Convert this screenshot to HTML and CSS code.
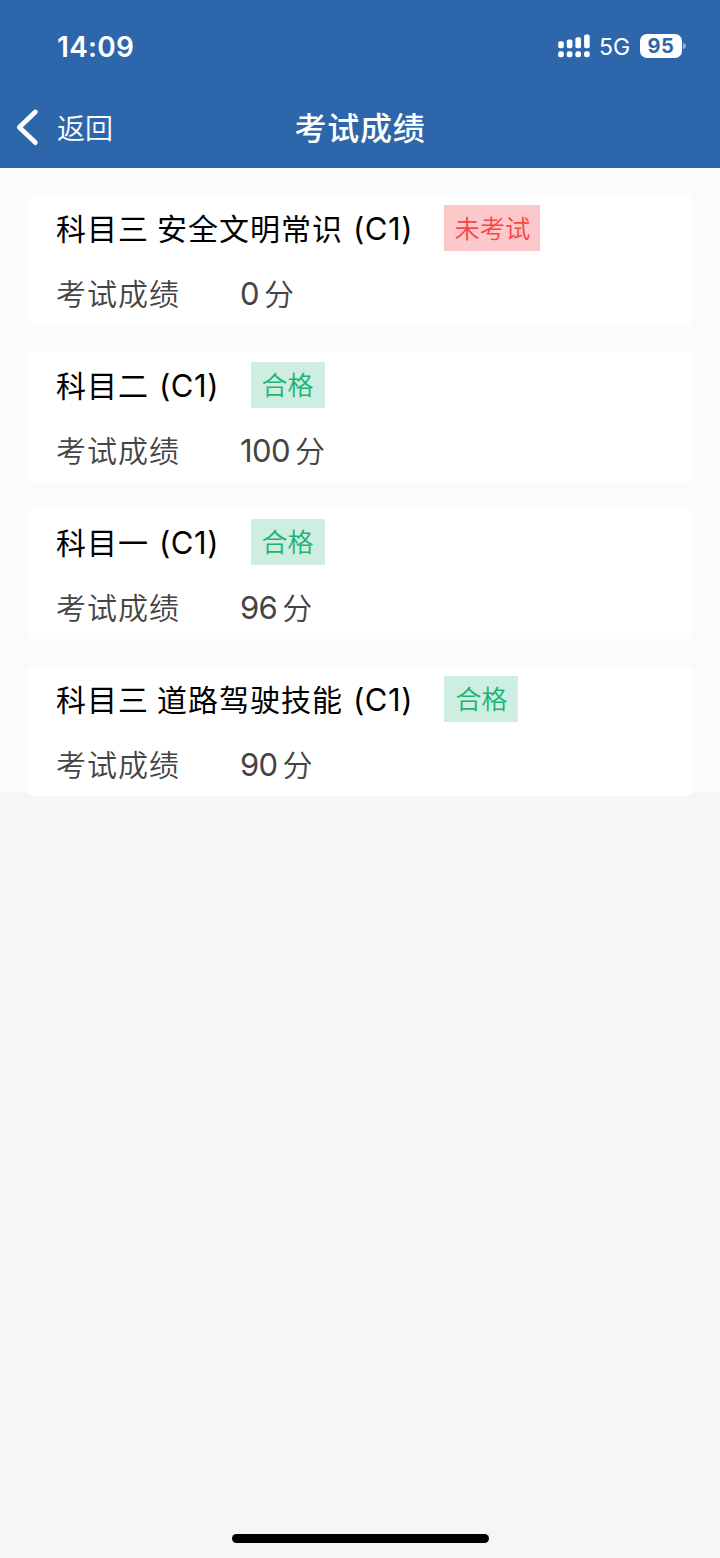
FILE: index.html
```html
<!DOCTYPE html>
<html lang="zh-CN">
<head>
  <meta charset="UTF-8" />
  <title>考试成绩</title>
  <link rel="stylesheet" href="styles.css">
</head>
<body>

  <!-- Header -->
  <header>
    <div class="status-bar">
      <span class="time">14:09</span>
      <div class="status-icons">
        <svg class="signal" width="33" height="24" viewBox="0 0 33 24" fill="#fff">
          <rect x="0.2" y="7.2" width="5.6" height="7" rx="1.8"/>
          <rect x="8.8" y="5.4" width="5.6" height="8.8" rx="1.8"/>
          <rect x="17.4" y="3.2" width="5.6" height="11" rx="1.8"/>
          <rect x="26.1" y="0.4" width="5.6" height="13.8" rx="1.8"/>
          <rect x="0.2" y="17.2" width="5.6" height="6" rx="2"/>
          <rect x="8.8" y="17.2" width="5.6" height="6" rx="2"/>
          <rect x="17.4" y="17.2" width="5.6" height="6" rx="2"/>
          <rect x="26.1" y="17.2" width="5.6" height="6" rx="2"/>
        </svg>
        <span class="network">5G</span>
        <span class="battery">95</span>
        <svg class="battery-cap" width="4" height="8" viewBox="0 0 4 8">
          <path d="M0 0.5 Q3 1.8 3 4 Q3 6.2 0 7.5 Z" fill="#8fb0d8"/>
        </svg>
      </div>
    </div>
    <nav>
      <a href="#" class="back">
        <svg width="24" height="38" viewBox="0 0 24 38" fill="none" stroke="#fff" stroke-width="4.8" stroke-linecap="round" stroke-linejoin="round">
          <path d="M20.3 4 L4.3 19.3 L20.3 34.6"/>
        </svg>
        <span>返回</span>
      </a>
      <h1>考试成绩</h1>
    </nav>
  </header>

  <!-- Score list -->
  <main>
    <div class="card">
      <div class="card-title">
        <h2>科目三 安全文明常识 <span class="type">(C1)</span></h2>
        <span class="tag tag-none">未考试</span>
      </div>
      <div class="score"><span class="label">考试成绩</span><span class="num">0</span>分</div>
    </div>

    <div class="card">
      <div class="card-title">
        <h2>科目二 <span class="type">(C1)</span></h2>
        <span class="tag tag-pass">合格</span>
      </div>
      <div class="score"><span class="label">考试成绩</span><span class="num">100</span>分</div>
    </div>

    <div class="card">
      <div class="card-title">
        <h2>科目一 <span class="type">(C1)</span></h2>
        <span class="tag tag-pass">合格</span>
      </div>
      <div class="score"><span class="label">考试成绩</span><span class="num">96</span>分</div>
    </div>

    <div class="card">
      <div class="card-title">
        <h2>科目三 道路驾驶技能 <span class="type">(C1)</span></h2>
        <span class="tag tag-pass">合格</span>
      </div>
      <div class="score"><span class="label">考试成绩</span><span class="num">90</span>分</div>
    </div>
  </main>

  <footer>
    <div class="home-bar"></div>
  </footer>

</body>
</html>
```
FILE: styles.css
```css
* {
  box-sizing: border-box;
  margin: 0;
  padding: 0;
}

body {
  display: flex;
  flex-direction: column;
  height: 1558px;
  background: #f6f6f6;
  color: #000;
  font-family: 'Inter', 'Noto Sans CJK SC', sans-serif;
}

header {
  height: 168px;
  background: #2d66aa;
  color: #fff;
}

.status-bar {
  display: flex;
  justify-content: space-between;
  align-items: center;
  height: 92px;
  padding: 0 33px 0 57px;
}

.time {
  padding-top: 1px;
  font-size: 28px;
  font-weight: 600;
  line-height: 32px;
  letter-spacing: 0.3px;
}

.status-icons {
  display: flex;
  align-items: center;
}

.network {
  margin-left: 8px;
  padding-top: 2px;
  width: 32px;
  font-size: 23px;
  line-height: 26px;
}

.battery {
  width: 42px;
  height: 24px;
  margin-left: 9px;
  border-radius: 7px;
  background: #fff;
  color: #2d66aa;
  font-size: 20px;
  font-weight: 700;
  line-height: 24px;
  letter-spacing: 0.5px;
  text-align: center;
}

.battery-cap {
  margin-left: 1px;
}

nav {
  display: grid;
  grid-template-columns: 1fr auto 1fr;
  align-items: center;
  height: 70px;
  padding: 0 15px;
}

.back {
  display: flex;
  align-items: center;
  color: #fff;
  font-size: 28px;
  font-weight: 350;
  line-height: 40px;
  text-decoration: none;
}

.back span {
  margin-left: 18px;
  padding-top: 4px;
}

nav h1 {
  padding-top: 3px;
  font-size: 32px;
  font-weight: 500;
  line-height: 44px;
  letter-spacing: 0.8px;
}

main {
  display: flex;
  flex-direction: column;
  gap: 27px;
  height: 625px;
  padding: 27px 27px 0;
  background: #fbfbfb;
}

.card {
  flex: none;
  height: 130px;
  padding: 10px 29px 0;
  border-radius: 8px;
  background: #fff;
}

.card-title {
  display: flex;
  align-items: center;
  height: 46px;
}

.card-title h2 {
  padding-top: 2px;
  font-size: 30px;
  font-weight: 400;
  line-height: 46px;
  letter-spacing: 1px;
  word-spacing: -1.5px;
}

.type {
  margin-left: 2px;
  font-size: 31px;
  letter-spacing: 0.6px;
}

.tag {
  height: 46px;
  margin-left: 31.3px;
  padding: 1px 10px 0;
  font-size: 25.3px;
  font-weight: 350;
  line-height: 46px;
}

.tag-none {
  background: #fdc8ca;
  color: #fa4447;
}

.tag-pass {
  padding: 1px 11px 0;
  background: #cdeee0;
  color: #1eb373;
  font-size: 26px;
}

.score {
  display: flex;
  align-items: center;
  height: 46px;
  margin-top: 20px;
  color: #444;
  font-size: 30px;
  font-weight: 350;
  line-height: 46px;
}

.label {
  width: 184px;
  letter-spacing: 1px;
}

.num {
  margin-right: 5px;
  font-size: 31px;
  font-weight: 400;
  letter-spacing: -0.6px;
}

footer {
  display: flex;
  justify-content: center;
  margin-top: auto;
  padding-bottom: 15px;
}

.home-bar {
  width: 257px;
  height: 9px;
  border-radius: 5px;
  background: #000;
}
```
